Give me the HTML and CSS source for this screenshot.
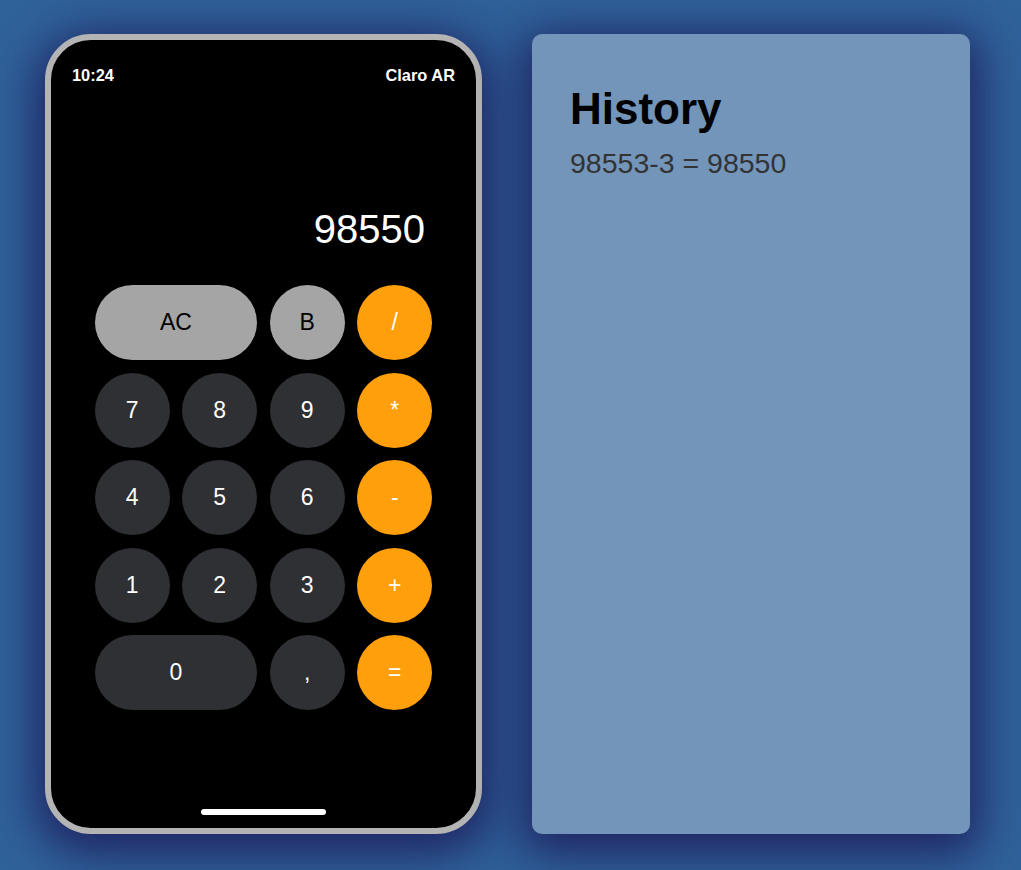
FILE: index.html
```html
<!DOCTYPE html>
<html lang="en">
<head>
<meta charset="utf-8">
<title>Calculator</title>
<link rel="stylesheet" href="styles.css">
</head>
<body>
<main class="layout">
  <section class="phone">
    <div class="status">
      <span class="time">10:24</span>
      <span class="carrier">Claro AR</span>
    </div>
    <div class="display">98550</div>
    <div class="keypad">
      <button class="key key-light key-wide">AC</button>
      <button class="key key-light">B</button>
      <button class="key key-op">/</button>
      <button class="key key-dark">7</button>
      <button class="key key-dark">8</button>
      <button class="key key-dark">9</button>
      <button class="key key-op">*</button>
      <button class="key key-dark">4</button>
      <button class="key key-dark">5</button>
      <button class="key key-dark">6</button>
      <button class="key key-op">-</button>
      <button class="key key-dark">1</button>
      <button class="key key-dark">2</button>
      <button class="key key-dark">3</button>
      <button class="key key-op">+</button>
      <button class="key key-dark key-wide">0</button>
      <button class="key key-dark">,</button>
      <button class="key key-op">=</button>
    </div>
    <div class="home-indicator"></div>
  </section>
  <section class="history">
    <h1 class="history-title">History</h1>
    <p class="history-item">98553-3 = 98550</p>
  </section>
</main>
</body>
</html>
```

FILE: styles.css
```css
* { box-sizing: border-box; }

html, body {
  margin: 0;
  padding: 0;
}

body {
  background: #30629a;
  font-family: "Liberation Sans", Arial, sans-serif;
  width: 1021px;
  height: 870px;
  overflow: hidden;
}

.layout {
  display: flex;
  gap: 50px;
  padding: 34px 0 0 45px;
}

.phone {
  width: 437px;
  height: 800px;
  border: 6px solid #b4b4b4;
  border-radius: 46px;
  background: #000;
  display: flex;
  flex-direction: column;
  box-shadow: 0 10px 45px 10px rgba(30, 34, 96, 0.95);
}

.status {
  display: flex;
  justify-content: space-between;
  padding: 26px 21px 0 21px;
  color: #fff;
  font-weight: bold;
  font-size: 16.4px;
  line-height: 18px;
}

.display {
  margin-top: 123px;
  padding: 0 51px 0 44px;
  text-align: right;
  color: #fff;
  font-size: 40px;
  line-height: 44px;
}

.keypad {
  margin-top: 34px;
  display: grid;
  grid-template-columns: repeat(4, 75px);
  grid-auto-rows: 75px;
  gap: 12.5px;
  justify-content: center;
}

.key {
  border: none;
  border-radius: 38px;
  font-family: "Liberation Sans", Arial, sans-serif;
  font-size: 23px;
  padding: 0;
  cursor: pointer;
}

.key-wide { grid-column: span 2; }

.key-light { background: #a5a5a5; color: #000; }
.key-dark { background: #2f3033; color: #fff; }
.key-op { background: #fe9f0b; color: #fff; }

.home-indicator {
  margin: auto auto 13px auto;
  width: 125px;
  height: 6px;
  border-radius: 3px;
  background: #fff;
}

.history {
  width: 438px;
  height: 800px;
  background: #7395ba;
  border-radius: 10px;
  padding: 49px 38px;
  box-shadow: 0 10px 45px 10px rgba(30, 34, 96, 0.95);
}

.history-title {
  margin: 0;
  font-size: 44px;
  line-height: 51px;
  font-weight: bold;
  color: #000;
}

.history-item {
  margin: 13px 0 0 0;
  font-size: 28.5px;
  line-height: 32px;
  color: #333;
}
```
